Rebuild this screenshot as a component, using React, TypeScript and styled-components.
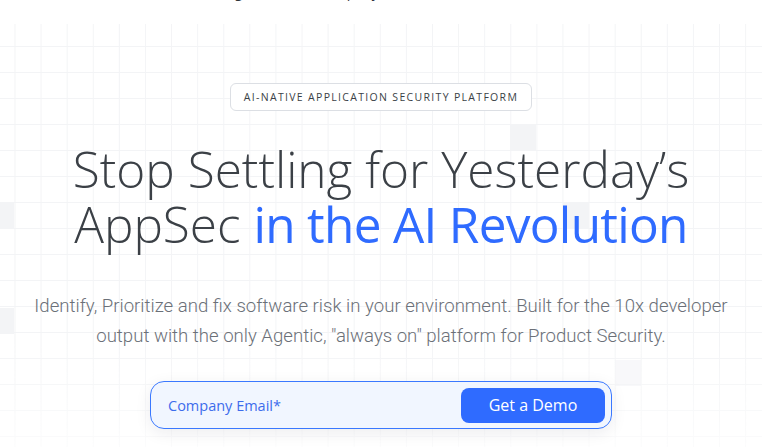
import React from 'react';
import styled, {createGlobalStyle} from 'styled-components';

const GlobalStyle = createGlobalStyle`
  html, body {
    margin: 0;
    padding: 0;
    background: #ffffff;
  }
  body {
    font-family: "Open Sans", "Liberation Sans", sans-serif;
    -webkit-font-smoothing: antialiased;
  }
  * {
    box-sizing: border-box;
  }
`;

const Page = styled.div`
  width: 100%;
  min-height: 100vh;
  overflow: hidden;
  background: #ffffff;
`;

const TopStrip = styled.div`
  height: 24px;
  overflow: hidden;
`;

const TopText = styled.p`
  margin: -18px 0 0 0;
  padding-left: 226px;
  font-size: 14px;
  line-height: 20px;
  color: #30343a;
  white-space: nowrap;
`;

const Hero = styled.section`
  position: relative;
  min-height: 423px;
  display: flex;
  flex-direction: column;
  align-items: center;

  &::before {
    content: '';
    position: absolute;
    inset: 0;
    background-image:
      linear-gradient(to right, #f3f4f6 1px, transparent 1px),
      linear-gradient(to bottom, #f3f4f6 1px, transparent 1px);
    background-size: 26.1px 26px;
    background-position: 14.5px 22px;
    -webkit-mask-image: linear-gradient(to bottom, #000 0%, #000 75%, rgba(0, 0, 0, 0.35) 100%);
    mask-image: linear-gradient(to bottom, #000 0%, #000 75%, rgba(0, 0, 0, 0.35) 100%);
    pointer-events: none;
  }
`;

const Cell = styled.span<{$x: number; $y: number; $fade?: number}>`
  position: absolute;
  left: ${p => p.$x}px;
  top: ${p => p.$y}px;
  width: 26px;
  height: 26px;
  background: #f3f4f6;
  opacity: ${p => p.$fade ?? 1};
`;

const Content = styled.div`
  position: relative;
  z-index: 1;
  display: flex;
  flex-direction: column;
  align-items: center;
  text-align: center;
`;

const Badge = styled.div`
  margin-top: 59px;
  height: 28px;
  padding: 0 13px;
  display: flex;
  align-items: center;
  border: 1px solid #dcdfe4;
  border-radius: 6px;
  background: #ffffff;
  font-size: 10.5px;
  letter-spacing: 1.32px;
  color: #3a3f46;
  text-transform: uppercase;
`;

const Title = styled.h1`
  margin: 31px 0 0 0;
  font-size: 49.5px;
  line-height: 55px;
  font-weight: 300;
  color: #3b4046;
`;

const Accent = styled.span`
  color: #2f6bff;
  font-weight: 500;
  letter-spacing: -0.7px;
`;

const Lead = styled.p`
  margin: 39px 0 0 0;
  font-family: "Roboto", "Liberation Sans", sans-serif;
  font-size: 18.6px;
  line-height: 30px;
  font-weight: 300;
  color: #6b7078;
`;

const EmailForm = styled.form`
  margin-top: 30px;
  width: 462px;
  height: 48px;
  padding: 5px 6px 5px 15px;
  display: flex;
  align-items: center;
  border: 1px solid #3a78ff;
  border-radius: 14px;
  background: #f1f6ff;
  box-shadow: 0 4px 16px rgba(20, 30, 50, 0.08);
`;

const EmailInput = styled.input`
  flex: 1;
  min-width: 0;
  border: none;
  outline: none;
  background: transparent;
  font-family: "Open Sans", "Liberation Sans", sans-serif;
  font-size: 14.5px;
  color: #2f5fe0;

  &::placeholder {
    color: #3d6cec;
  }
`;

const DemoButton = styled.button`
  width: 144px;
  height: 35px;
  border: none;
  border-radius: 8px;
  background: #2f6bff;
  color: #ffffff;
  font-family: "Open Sans", "Liberation Sans", sans-serif;
  font-size: 16px;
  cursor: pointer;
`;

const cells = [
  {x: 510, y: 100},
  {x: 563, y: 179},
  {x: -12, y: 179},
  {x: -12, y: 284},
  {x: 615, y: 336, fade: 0.6},
];

const App: React.FC = () => {
  return (
    <Page>
      <GlobalStyle />
      <TopStrip>
        <TopText>Agentic AI for Company</TopText>
      </TopStrip>
      <Hero>
        {cells.map((c, i) => (
          <Cell key={i} $x={c.x} $y={c.y} $fade={c.fade} />
        ))}
        <Content>
          <Badge>AI-Native Application Security Platform</Badge>
          <Title>
            Stop Settling for Yesterday’s
            <br />
            AppSec <Accent>in the AI Revolution</Accent>
          </Title>
          <Lead>
            Identify, Prioritize and fix software risk in your environment. Built for the 10x developer
            <br />
            output with the only Agentic, "always on" platform for Product Security.
          </Lead>
          <EmailForm onSubmit={e => e.preventDefault()}>
            <EmailInput type="email" placeholder="Company Email*" />
            <DemoButton type="submit">Get a Demo</DemoButton>
          </EmailForm>
        </Content>
      </Hero>
    </Page>
  );
};

export default App;
